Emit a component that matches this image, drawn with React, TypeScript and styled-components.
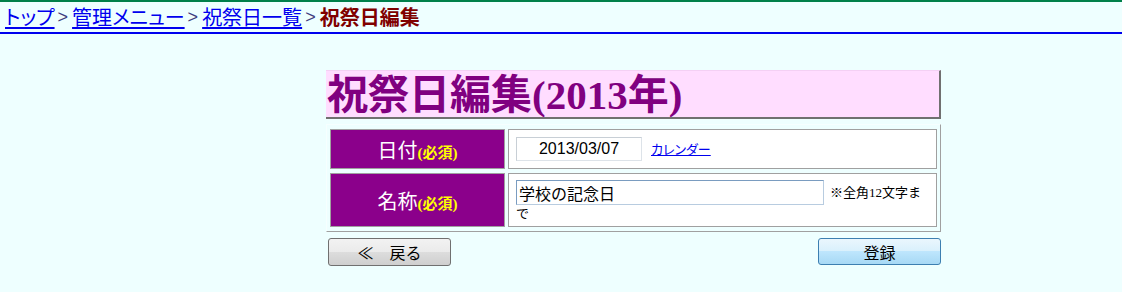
import React from "react";
import styled, { createGlobalStyle } from "styled-components";

const Global = createGlobalStyle`
  html, body { margin: 0; padding: 0; background: #eeffff; }
  body { font-family: "Noto Sans CJK JP", "Liberation Sans", sans-serif; color: #000; }
`;

const TopBar = styled.nav`
  border-top: 2px solid #00804a;
  border-bottom: 2px solid #0000ee;
  height: 30px;
  padding-left: 5px;
  display: flex;
  align-items: center;
  font-size: 20px;
  line-height: 30px;
  white-space: nowrap;
  font-feature-settings: "palt";
`;

const Crumb = styled.a`
  color: #0000ee;
  text-decoration: underline;
  text-underline-offset: 2px;
  cursor: pointer;
`;

const Sep = styled.span`
  color: #404080;
  font-family: "Liberation Sans", sans-serif;
  font-size: 18px;
  margin: 0 4px 0 3px;
`;

const Current = styled.span`
  color: #800000;
  font-weight: bold;
`;

const Main = styled.main`
  width: 615px;
  margin: 36px 0 0 326px;
`;

const Heading = styled.h1`
  margin: 0;
  height: 46px;
  background: #ffddff;
  border-top: 1px solid #f4d0f4;
  border-right: 2px solid #707070;
  border-bottom: 2px solid #707070;
  color: #800080;
  font-family: "Liberation Serif", "Noto Sans CJK JP", serif;
  font-size: 41px;
  font-weight: bold;
  line-height: 48px;
  padding-left: 1px;
  white-space: nowrap;
  overflow: hidden;
`;

const FormTable = styled.table`
  margin-top: 5px;
  width: 615px;
  border-collapse: separate;
  border-spacing: 3px 4px;
  border: 1px solid;
  border-color: #f6ffff #a0a0a0 #a0a0a0 #f6ffff;
  background: #eeffff;
`;

const LabelCell = styled.th<{ $h: number }>`
  width: 173px;
  height: ${(p) => p.$h}px;
  background: #8b008b;
  border: 1px solid #a0a0a0;
  color: #ffffff;
  font-size: 20px;
  font-weight: normal;
  text-align: center;
  vertical-align: middle;
  padding: 0;
  white-space: nowrap;
`;

const Required = styled.span`
  color: #ffff00;
  font-family: "Liberation Serif", "Noto Sans CJK JP", serif;
  font-size: 15px;
  font-weight: bold;
`;

const DataCell = styled.td<{ $pad: string }>`
  background: #ffffff;
  border: 1px solid #a0a0a0;
  padding: ${(p) => p.$pad};
  vertical-align: middle;
  font-size: 13px;
  line-height: 16px;
`;

const TextInput = styled.input<{ $w: number; $center?: boolean; $focus?: boolean }>`
  box-sizing: border-box;
  width: ${(p) => p.$w}px;
  height: ${(p) => (p.$focus ? 25 : 24)}px;
  border: 1px solid;
  border-color: ${(p) =>
    p.$focus ? "#7a9cc0 #b8cce0 #b8cce0 #7a9cc0" : "#c8cfd6 #dde3e9 #dde3e9 #c8cfd6"};
  background: #ffffff;
  font-family: ${(p) =>
    p.$center ? '"Liberation Sans", sans-serif' : '"Noto Sans CJK JP", sans-serif'};
  font-size: 16px;
  text-align: ${(p) => (p.$center ? "center" : "left")};
  padding: 0 2px;
  margin: 0;
  vertical-align: middle;
  color: #000;
  outline: none;
`;

const CalLink = styled.a`
  color: #0000ee;
  font-size: 13px;
  font-feature-settings: "palt";
  text-decoration: underline;
  margin-left: 9px;
  vertical-align: middle;
  cursor: pointer;
`;

const Note = styled.span`
  font-family: "Liberation Serif", "Noto Sans CJK JP", serif;
  font-size: 13px;
  margin-left: 6px;
  vertical-align: middle;
`;

const Buttons = styled.div`
  display: flex;
  justify-content: space-between;
  margin-top: 6px;
  padding: 0 0 0 2px;
`;

const Button = styled.button<{ $blue?: boolean }>`
  width: 123px;
  height: ${(p) => (p.$blue ? 27 : 28)}px;
  border-radius: 3px;
  border: 1px solid ${(p) => (p.$blue ? "#3c7fb1" : "#707070")};
  background: ${(p) =>
    p.$blue
      ? "linear-gradient(#eaf6fd 0%, #d9f0fc 49%, #bee6fd 50%, #a7d9f5 100%)"
      : "linear-gradient(#f2f2f2 0%, #ebebeb 49%, #dddddd 50%, #cfcfcf 100%)"};
  font-family: "Noto Sans CJK JP", sans-serif;
  font-size: 16px;
  line-height: 20px;
  color: #000;
  padding: 0;
  cursor: pointer;
`;

export default function App() {
  return (
    <>
      <Global />
      <TopBar>
        <Crumb>トップ</Crumb>
        <Sep>&gt;</Sep>
        <Crumb>管理メニュー</Crumb>
        <Sep>&gt;</Sep>
        <Crumb>祝祭日一覧</Crumb>
        <Sep>&gt;</Sep>
        <Current>祝祭日編集</Current>
      </TopBar>
      <Main>
        <Heading>祝祭日編集(2013年)</Heading>
        <FormTable>
          <tbody>
            <tr>
              <LabelCell $h={38}>
                日付<Required>(必須)</Required>
              </LabelCell>
              <DataCell $pad="0 7px">
                <TextInput $w={126} $center defaultValue="2013/03/07" />
                <CalLink>カレンダー</CalLink>
              </DataCell>
            </tr>
            <tr>
              <LabelCell $h={52}>
                名称<Required>(必須)</Required>
              </LabelCell>
              <DataCell $pad="6px 7px 5px">
                <TextInput $w={308} $focus defaultValue="学校の記念日" />
                <Note>※全角12文字ま</Note>
                <br />
                で
              </DataCell>
            </tr>
          </tbody>
        </FormTable>
        <Buttons>
          <Button>≪　戻る</Button>
          <Button $blue>登録</Button>
        </Buttons>
      </Main>
    </>
  );
}
